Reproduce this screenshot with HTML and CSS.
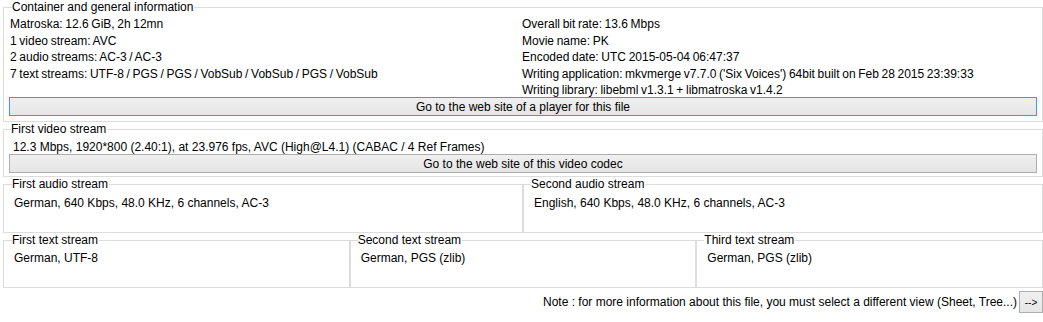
FILE: index.html
```html
<!DOCTYPE html>
<html lang="en">
<head>
    <meta charset="UTF-8">
    <title>MediaInfo - Basic</title>
    <link rel="stylesheet" href="styles.css">
</head>
<body>
    <div class="painel">

        <!-- Geral -->
        <fieldset class="grupo grupo-geral">
            <legend>Container and general information</legend>
            <div class="colunas">
                <div class="coluna">
                    <div>Matroska: 12.6 GiB, 2h 12mn</div>
                    <div>1 video stream: AVC</div>
                    <div>2 audio streams: AC-3 / AC-3</div>
                    <div>7 text streams: UTF-8 / PGS / PGS / VobSub / VobSub / PGS / VobSub</div>
                </div>
                <div class="coluna coluna-direita">
                    <div>Overall bit rate: 13.6 Mbps</div>
                    <div>Movie name: PK</div>
                    <div>Encoded date: UTC 2015-05-04 06:47:37</div>
                    <div>Writing application: mkvmerge v7.7.0 ('Six Voices') 64bit built on Feb 28 2015 23:39:33</div>
                    <div>Writing library: libebml v1.3.1 + libmatroska v1.4.2</div>
                </div>
            </div>
            <button class="botao botao-foco">Go to the web site of a player for this file</button>
        </fieldset>

        <!-- Video -->
        <fieldset class="grupo grupo-video">
            <legend>First video stream</legend>
            <div class="linha">12.3 Mbps, 1920*800 (2.40:1), at 23.976 fps, AVC (High@L4.1) (CABAC / 4 Ref Frames)</div>
            <button class="botao">Go to the web site of this video codec</button>
        </fieldset>

        <!-- Audio -->
        <div class="fileira">
            <fieldset class="grupo grupo-fluxo grupo-audio">
                <legend>First audio stream</legend>
                <div class="linha">German, 640 Kbps, 48.0 KHz, 6 channels, AC-3</div>
            </fieldset>
            <fieldset class="grupo grupo-fluxo grupo-audio">
                <legend>Second audio stream</legend>
                <div class="linha">English, 640 Kbps, 48.0 KHz, 6 channels, AC-3</div>
            </fieldset>
        </div>

        <!-- Legendas -->
        <div class="fileira">
            <fieldset class="grupo grupo-fluxo grupo-texto">
                <legend>First text stream</legend>
                <div class="linha">German, UTF-8</div>
            </fieldset>
            <fieldset class="grupo grupo-fluxo grupo-texto">
                <legend>Second text stream</legend>
                <div class="linha">German, PGS (zlib)</div>
            </fieldset>
            <fieldset class="grupo grupo-fluxo grupo-texto">
                <legend>Third text stream</legend>
                <div class="linha">German, PGS (zlib)</div>
            </fieldset>
        </div>

        <div class="rodape">
            <span>Note : for more information about this file, you must select a different view (Sheet, Tree...)</span>
            <button class="botao-seta">--&gt;</button>
        </div>
    </div>
</body>
</html>
```

FILE: styles.css
```css
/* --- Base --- */
:root {
    --borda: #dcdcdc;
    --texto: #000;
    --fonte: 'Liberation Sans', Arial, sans-serif;
}

* {
    box-sizing: border-box;
}

body {
    margin: 0;
    background: #fff;
    color: var(--texto);
    font-family: var(--fonte);
    font-size: 12px;
}

.painel {
    width: 1040px;
    margin-left: 3px;
}

/* --- Caixas de grupo --- */
.grupo {
    margin: 0;
    border: 1px solid var(--borda);
    padding: 0 5px;
    min-width: 0;
}

.grupo legend {
    margin-left: 3px;
    padding: 0 1px 0 0;
    line-height: 14px;
}

.colunas {
    display: flex;
    height: 83px;
    line-height: 16.5px;
    padding-top: 2px;
    word-spacing: -0.7px;
}

.coluna {
    width: 513px;
    padding-left: 1px;
}

.coluna-direita {
    padding-left: 0;
}

.linha {
    line-height: 16px;
    padding: 2px 0 0 5px;
}

.grupo-geral {
    padding-bottom: 5px;
}

.grupo-video {
    padding-bottom: 3px;
}

.grupo-video legend {
    margin-left: 2px;
}

.grupo-video .linha {
    padding: 4px 0 0 4px;
    height: 18px;
    line-height: 14px;
}

/* --- Botões --- */
.botao {
    display: block;
    width: 100%;
    height: 19px;
    margin: 0;
    padding: 0;
    font-family: var(--fonte);
    font-size: 12px;
    color: var(--texto);
    background: linear-gradient(#f0f0f0, #e5e5e5);
    border: 1px solid #adadad;
}

.botao-foco {
    border-color: #3399ff;
}

/* --- Fileiras de fluxos --- */
.fileira {
    display: flex;
}

.grupo-fluxo {
    flex: 1;
    padding: 0 5px;
}

.grupo-fluxo legend {
    margin-left: 3px;
}

.grupo-fluxo + .grupo-fluxo legend {
    margin-left: 2px;
}

.grupo-audio {
    height: 56px;
}

.grupo-audio .linha {
    padding-top: 4px;
}

.grupo-texto {
    height: 55px;
}

.grupo-texto .linha {
    padding-top: 3px;
}

/* --- Rodapé --- */
.rodape {
    display: flex;
    justify-content: flex-end;
    align-items: center;
    gap: 2px;
    margin-top: 3px;
}

.botao-seta {
    width: 24px;
    height: 22px;
    margin: 0;
    padding: 0;
    font-family: var(--fonte);
    font-size: 10px;
    background: linear-gradient(#f0f0f0, #e5e5e5);
    border: 1px solid #adadad;
}
```
